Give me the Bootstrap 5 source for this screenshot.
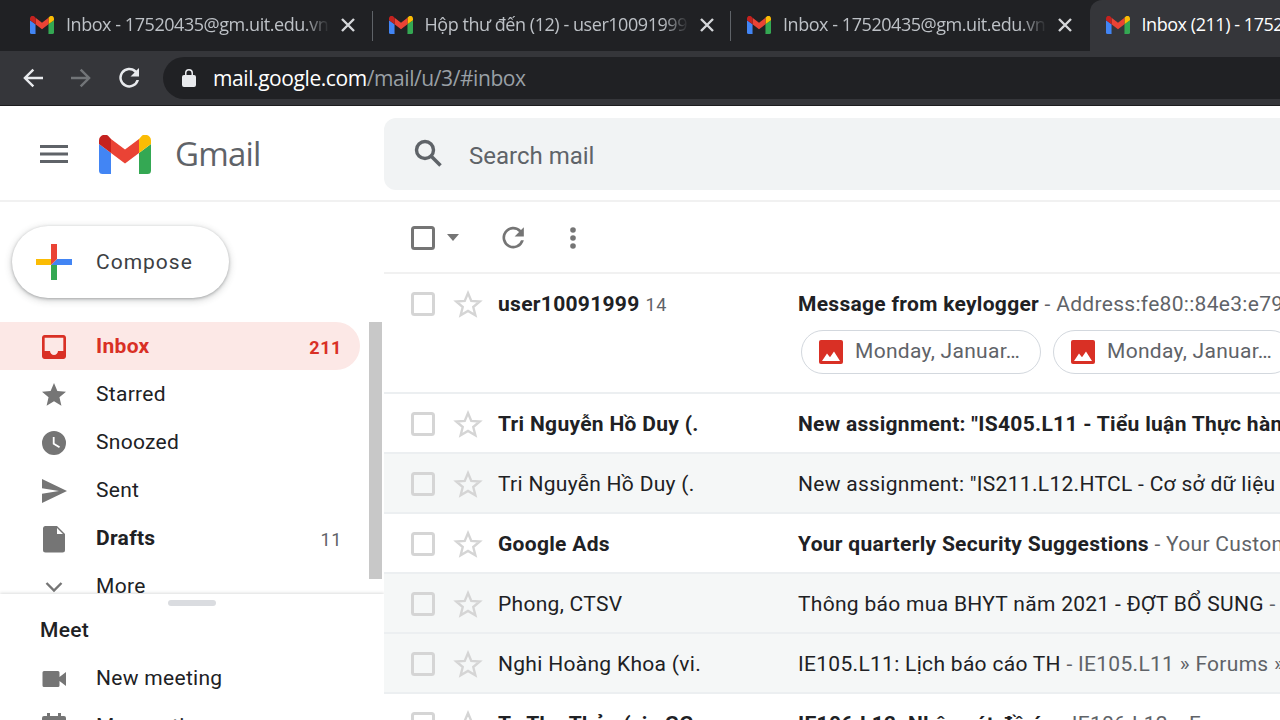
<!DOCTYPE html>
<html lang="vi">
<head>
<meta charset="UTF-8">
<title>Inbox (211) - Gmail</title>
<link href="https://cdn.jsdelivr.net/npm/bootstrap@5.3.0/dist/css/bootstrap.min.css" rel="stylesheet">
<style>
html, body { width: 1280px; height: 720px; overflow: hidden; }
body { font-family: Roboto, "Liberation Sans", sans-serif; background: #fff; color: #202124; font-size: 21px; }

/* chrome */
.tabstrip { height: 51px; background: #202124; padding-left: 14px; overflow: hidden; position: relative; }
.chrome-tab { width: 358.5px; height: 51px; padding: 0 0 2px 16px; font-family: "Open Sans", sans-serif; font-size: 18px; letter-spacing: -.45px; color: #bdc1c6; position: relative; flex: none; }
.chrome-tab .tab-title { width: 264px; margin-left: 12px; white-space: nowrap; overflow: hidden; -webkit-mask-image: linear-gradient(90deg, #000 90%, transparent); mask-image: linear-gradient(90deg, #000 90%, transparent); }
.chrome-tab .tab-x { margin-left: 11px; }
.chrome-tab.has-sep::after { content: ""; position: absolute; right: 0; top: 11px; width: 1px; height: 30px; background: #5f6368; }
.chrome-tab.current { background: #35363a; color: #fff; border-radius: 12px 12px 0 0; }
.chrome-tab.current .tab-title { width: 300px; -webkit-mask-image: none; mask-image: none; }
.addrbar { height: 55px; background: #35363a; border-bottom: 1px solid #1d1d1f; padding: 6px 0 6px 21px; }
.addr-btn { width: 24px; height: 24px; flex: none; }
.omnibox { height: 42px; flex: 1; margin-left: 22px; background: #202124; border-radius: 21px 0 0 21px; padding-left: 19px; font-family: "Open Sans", sans-serif; font-size: 21px; letter-spacing: -.42px; color: #9aa0a6; }
.omnibox b { font-weight: 400; color: #fff; }
.omni-url { padding-top: 2px; margin-left: 1px; }

/* gmail head */
.gm-head { height: 96px; border-bottom: 2px solid #f1f1f1; padding-top: 12px; }
.gm-brand { width: 384px; height: 72px; padding-left: 40px; flex: none; }
.gm-logo { margin-left: 31px; }
.gm-word { font-family: "Open Sans", sans-serif; font-size: 33px; color: #5f6368; margin-left: 24px; letter-spacing: -.8px; }
.searchbox { flex: 1; height: 72px; background: #f1f3f4; border-radius: 12px 0 0 12px; padding-left: 30px; font-size: 24px; color: #5f6368; }
.searchbox svg { margin-right: 27px; margin-bottom: 2px; }
.search-txt { padding-top: 4px; }

/* sidebar */
.gm-body { height: 518px; }
.gm-side { width: 384px; flex: none; overflow: hidden; }
.side-top { height: 392px; overflow: hidden; padding-top: 24px; }
.compose-btn { width: 217px; height: 72px; margin-left: 12px; border-radius: 36px; background: #fff; box-shadow: 0 1px 3px rgba(60,64,67,.35), 0 2px 7px 1px rgba(60,64,67,.2); padding-left: 24px; font-size: 21px; letter-spacing: 1px; color: #3c4043; }
.compose-btn svg { margin-right: 24px; }
.compose-txt { margin-top: 2px; }
.side-wrap { margin-top: 24px; }
.side-list { width: 360px; flex: none; }
.side-bar { width: 13px; height: 257px; margin-left: 9px; background: #c8c8c8; flex: none; }
.side-item { height: 48px; padding: 2px 18px 0 42px; letter-spacing: .3px; color: #202124; border-radius: 0 24px 24px 0; }
.side-item svg { width: 24px; height: 24px; margin-right: 30px; flex: none; overflow: visible; }
.side-item .cnt { margin-left: auto; font-size: 18px; letter-spacing: .6px; color: #5f6368; }
.side-item.sel { background: #fce8e6; color: #d93025; font-weight: 700; }
.side-item.sel .cnt { color: #d93025; font-weight: 700; }
.side-item.strong { font-weight: 700; }
.side-meet { height: 126px; background: #fff; position: relative; box-shadow: 0 -1px 3px rgba(60,64,67,.18); padding-top: 6px; }
.drag-handle { width: 48px; height: 6px; border-radius: 3px; background: #dadce0; margin: 0 auto; }
.meet-title { margin: 9px 0 0 40px; height: 30px; line-height: 30px; font-weight: 500; letter-spacing: .3px; }
.meet-list { margin-top: 9px; }

/* mail list */
.gm-main { flex: 1; overflow: hidden; }
.mail-tools { height: 72px; border-bottom: 2px solid #f1f1f1; padding: 2px 0 0 27px; }
.tool-ico { flex: none; display: block; }
.tool-refresh { margin-left: 37px; }
.tool-more { margin-left: 43px; }
.chk-master { color: #757575; }
.chk-row { color: #d5d5d5; }
.mail-row { height: 60px; border-bottom: 2px solid #eceff1; padding: 2px 0 0 27px; white-space: nowrap; }
.mail-row.tall { height: 120px; align-items: flex-start !important; padding-top: 18px; }
.mail-row.tall .star-ico { margin-top: -3px; }
.mail-row:not(.tall) .who, .mail-row:not(.tall) .what { margin-top: 2px; }
.mail-row.seen { background: #f5f7f7; }
.mail-row .who { width: 300px; margin-left: 15px; flex: none; letter-spacing: .3px; }
.mail-row .what { letter-spacing: .3px; }
.mail-row.fresh .who, .mail-row.fresh .what b { font-weight: 700; }
.mail-row .what b { font-weight: 400; }
.mail-row .snip { color: #5f6368; }
.mail-row .num { font-size: 18px; color: #5f6368; font-weight: 400; margin-left: 6px; letter-spacing: .5px; }
.star-ico { margin-left: 18px; flex: none; }
.row-head { height: 24px; line-height: 24px; }
.chip-line { margin: 14px 0 0 3px; }
.file-chip { width: 240px; height: 44px; flex: none; border: 1.5px solid #d3d8de; border-radius: 22px; padding-left: 17px; color: #5f6368; letter-spacing: .3px; overflow: hidden; }
.file-chip svg { margin-right: 12px; flex: none; }
.sprite { position: absolute; }
</style>
</head>
<body>

<svg width="0" height="0" class="sprite">
  <defs>
    <symbol id="gm" viewBox="0 0 52 39">
      <path fill="#4285f4" d="M3.500 39A3.500 3.500 0 0 1 0 35.500V9l12 9v21z"/>
      <path fill="#34a853" d="M40 39h8.500a3.500 3.500 0 0 0 3.500-3.500V9L40 18z"/>
      <path fill="#fbbc04" d="M40 4v14l12-9V5.500c0-4.800-5.500-7.500-9.300-4.600z"/>
      <path fill="#ea4335" d="M12 18V4l14 10.500L40 4v14L26 28.500z"/>
      <path fill="#c5221f" d="M0 5.500V9l12 9V4L9.300 .9C5.500-2 0 .7 0 5.500z"/>
    </symbol>
    <symbol id="chk" viewBox="0 0 24 24">
      <rect x="1.500" y="1.500" width="21" height="21" rx="2" fill="none" stroke="currentColor" stroke-width="3"/>
    </symbol>
    <symbol id="starline" viewBox="0 0 24 24">
      <path fill="none" stroke="#d5d5d5" stroke-width="1.900" d="M12 3.200l2.600 6.300 6.800.5-5.200 4.400 1.700 6.600L12 17.500 6.100 21l1.700-6.600-5.200-4.400 6.800-.5z"/>
    </symbol>
    <symbol id="pic" viewBox="0 0 24 24">
      <rect width="24" height="24" rx="2" fill="#d93025"/>
      <path fill="#fff" d="M3 21l5-7.500 3 3.800 4-5.800L21 21z"/>
    </symbol>
  </defs>
</svg>

<!-- thanh tab -->
<div class="tabstrip d-flex align-items-center">
  <div class="chrome-tab has-sep d-flex align-items-center">
    <svg width="24" height="18"><use href="#gm"/></svg>
    <span class="tab-title">Inbox - 17520435@gm.uit.edu.vn</span>
    <svg class="tab-x" width="14" height="14" viewBox="0 0 14 14"><path d="M1 1l12 12M13 1L1 13" stroke="#d5d7da" stroke-width="2.400"/></svg>
  </div>
  <div class="chrome-tab has-sep d-flex align-items-center">
    <svg width="24" height="18"><use href="#gm"/></svg>
    <span class="tab-title">Hộp thư đến (12) - user10091999</span>
    <svg class="tab-x" width="14" height="14" viewBox="0 0 14 14"><path d="M1 1l12 12M13 1L1 13" stroke="#d5d7da" stroke-width="2.400"/></svg>
  </div>
  <div class="chrome-tab d-flex align-items-center">
    <svg width="24" height="18"><use href="#gm"/></svg>
    <span class="tab-title">Inbox - 17520435@gm.uit.edu.vn</span>
    <svg class="tab-x" width="14" height="14" viewBox="0 0 14 14"><path d="M1 1l12 12M13 1L1 13" stroke="#d5d7da" stroke-width="2.400"/></svg>
  </div>
  <div class="chrome-tab current d-flex align-items-center">
    <svg width="24" height="18"><use href="#gm"/></svg>
    <span class="tab-title">Inbox (211) - 17520435@gm.uit.edu.vn</span>
  </div>
</div>

<div class="addrbar d-flex align-items-center">
  <svg class="addr-btn" viewBox="0 0 24 24"><path fill="#e8eaed" d="M22 10.800H6.800l6.400-6.400L11.500 2.700 2.200 12l9.300 9.300 1.700-1.700-6.400-6.400H22z"/></svg>
  <svg class="addr-btn ms-4" viewBox="0 0 24 24"><path fill="#727578" d="M2 10.800h15.200l-6.400-6.400 1.700-1.700 9.300 9.300-9.300 9.300-1.700-1.700 6.400-6.400H2z"/></svg>
  <svg class="addr-btn ms-4" viewBox="0 0 24 24"><path fill="#e8eaed" d="M19.400 4.600A10 10 0 1 0 22 14h-2.600a7.500 7.500 0 1 1-1.800-7.600L13.500 10.500H22V2z"/></svg>
  <div class="omnibox d-flex align-items-center">
    <svg width="14" height="18" viewBox="0 0 14 18" class="me-3"><path fill="#e8eaed" d="M12 6h-1V4a4 4 0 0 0-8 0v2H2a2 2 0 0 0-2 2v8a2 2 0 0 0 2 2h10a2 2 0 0 0 2-2V8a2 2 0 0 0-2-2zM4.500 6V4a2.500 2.500 0 0 1 5 0v2z"/></svg>
    <span class="omni-url"><b>mail.google.com</b>/mail/u/3/#inbox</span>
  </div>
</div>

<!-- header gmail -->
<div class="gm-head d-flex">
  <div class="gm-brand d-flex align-items-center">
    <svg width="28" height="18" viewBox="0 0 28 18"><path fill="#5f6368" d="M0 0h28v3H0zM0 7.500h28v3H0zM0 15h28v3H0z"/></svg>
    <svg class="gm-logo" width="52" height="39"><use href="#gm"/></svg>
    <span class="gm-word">Gmail</span>
  </div>
  <div class="searchbox d-flex align-items-center">
    <svg width="28" height="28" viewBox="0 0 28 28"><circle cx="11" cy="11" r="8.500" fill="none" stroke="#5f6368" stroke-width="3.400"/><path d="M17 17l9.500 9.500" stroke="#5f6368" stroke-width="3.600"/></svg>
    <span class="search-txt">Search mail</span>
  </div>
</div>

<div class="gm-body d-flex">
  <!-- cot trai -->
  <div class="gm-side">
    <div class="side-top">
      <div class="compose-btn d-flex align-items-center">
        <svg width="36" height="36" viewBox="0 0 36 36">
          <path fill="#fbbc04" d="M0 15h15v6H0z"/>
          <path fill="#34a853" d="M15 21h6v15h-6z"/>
          <path fill="#4285f4" d="M21 15h15v6H15z"/>
          <path fill="#ea4335" d="M15 0h6v15l-6 6z"/>
        </svg>
        <span class="compose-txt">Compose</span>
      </div>
      <div class="side-wrap d-flex align-items-start">
        <div class="side-list">
          <div class="side-item sel d-flex align-items-center">
            <svg viewBox="3 3 18 18"><path fill="#d93025" d="M19 3H5c-1.100 0-2 .9-2 2v14c0 1.100.9 2 2 2h14c1.100 0 2-.9 2-2V5c0-1.100-.9-2-2-2zm0 12h-4c0 1.660-1.350 3-3 3s-3-1.340-3-3H5V5h14v10z"/></svg>
            Inbox<span class="cnt">211</span>
          </div>
          <div class="side-item d-flex align-items-center">
            <svg viewBox="2 2 20 20"><path fill="#757575" d="M12 17.270L18.180 21l-1.640-7.030L22 9.240l-7.190-.61L12 2 9.190 8.630 2 9.240l5.460 4.730L5.820 21z"/></svg>
            Starred
          </div>
          <div class="side-item d-flex align-items-center">
            <svg viewBox="2 2 20 20"><path fill="#757575" d="M12 2a10 10 0 1 0 0 20 10 10 0 0 0 0-20zm4.200 14.200L11 13V7h1.500v5.200l4.500 2.700z"/></svg>
            Snoozed
          </div>
          <div class="side-item d-flex align-items-center">
            <svg viewBox="0 0 24 24"><path fill="#757575" d="M0 24l25-12L0 0v9.300L17 12 0 14.700z"/></svg>
            Sent
          </div>
          <div class="side-item strong d-flex align-items-center">
            <svg viewBox="0 0 24 24"><path fill="#757575" d="M3 -1h12l8 8v16a2.500 2.500 0 0 1-2.500 2.500h-17A2.500 2.500 0 0 1 1 23V1a2.500 2.500 0 0 1 2-2zm12 2v6h6z"/></svg>
            Drafts<span class="cnt fw-normal">11</span>
          </div>
          <div class="side-item d-flex align-items-center">
            <svg viewBox="0 0 24 24"><path fill="none" stroke="#757575" stroke-width="2.400" d="M4.500 8l7.500 7.500L19.500 8"/></svg>
            More
          </div>
        </div>
        <div class="side-bar"></div>
      </div>
    </div>
    <div class="side-meet">
      <div class="drag-handle"></div>
      <div class="meet-title">Meet</div>
      <div class="meet-list">
        <div class="side-item d-flex align-items-center">
          <svg viewBox="0 0 24 24"><path fill="#757575" d="M2 4h14a1.500 1.500 0 0 1 1.500 1.500V10L24 5v14l-6.500-5v4.500A1.500 1.500 0 0 1 16 20H2a1.500 1.500 0 0 1-1.500-1.500v-13A1.500 1.500 0 0 1 2 4z"/></svg>
          New meeting
        </div>
        <div class="side-item d-flex align-items-center">
          <svg viewBox="0 0 24 24"><path fill="#757575" d="M2 1h3v-3h3v3h8v-3h3v3h3a2 2 0 0 1 2 2v19a2 2 0 0 1-2 2H2a2 2 0 0 1-2-2V3a2 2 0 0 1 2-2z"/></svg>
          My meetings
        </div>
      </div>
    </div>
  </div>

  <!-- danh sach mail -->
  <div class="gm-main">
    <div class="mail-tools d-flex align-items-center">
      <svg class="tool-ico chk-master" width="24" height="24"><use href="#chk"/></svg>
      <svg class="tool-ico ms-2" width="20" height="10" viewBox="0 0 20 10"><path fill="#757575" d="M4 1h12l-6 7z"/></svg>
      <svg class="tool-ico tool-refresh" width="26" height="26" viewBox="0 0 24 24"><path fill="#757575" d="M19.400 4.600A10 10 0 1 0 22 14h-2.600a7.500 7.500 0 1 1-1.800-7.600L13.500 10.500H22V2z"/></svg>
      <svg class="tool-ico tool-more" width="8" height="24" viewBox="0 0 8 24"><circle cx="4" cy="4" r="2.800" fill="#757575"/><circle cx="4" cy="12" r="2.800" fill="#757575"/><circle cx="4" cy="20" r="2.800" fill="#757575"/></svg>
    </div>

    <div class="mail-row tall fresh d-flex">
      <svg class="tool-ico chk-row" width="24" height="24"><use href="#chk"/></svg>
      <svg class="star-ico" width="30" height="30"><use href="#starline"/></svg>
      <div class="who row-head">user10091999<span class="num">14</span></div>
      <div class="flex-grow-0">
        <div class="what row-head"><b>Message from keylogger</b><span class="snip"> - Address:fe80::84e3:e79</span></div>
        <div class="chip-line d-flex gap-2">
          <div class="file-chip d-flex align-items-center"><svg width="24" height="24"><use href="#pic"/></svg>Monday, Januar…</div>
          <div class="file-chip d-flex align-items-center ms-1"><svg width="24" height="24"><use href="#pic"/></svg>Monday, Januar…</div>
        </div>
      </div>
    </div>

    <div class="mail-row fresh d-flex align-items-center">
      <svg class="tool-ico chk-row" width="24" height="24"><use href="#chk"/></svg>
      <svg class="star-ico" width="30" height="30"><use href="#starline"/></svg>
      <div class="who">Tri Nguyễn Hồ Duy (.</div>
      <div class="what"><b>New assignment: "IS405.L11 - Tiểu luận Thực hành</b></div>
    </div>
    <div class="mail-row seen d-flex align-items-center">
      <svg class="tool-ico chk-row" width="24" height="24"><use href="#chk"/></svg>
      <svg class="star-ico" width="30" height="30"><use href="#starline"/></svg>
      <div class="who">Tri Nguyễn Hồ Duy (.</div>
      <div class="what"><b>New assignment: "IS211.L12.HTCL - Cơ sở dữ liệu</b></div>
    </div>
    <div class="mail-row fresh d-flex align-items-center">
      <svg class="tool-ico chk-row" width="24" height="24"><use href="#chk"/></svg>
      <svg class="star-ico" width="30" height="30"><use href="#starline"/></svg>
      <div class="who">Google Ads</div>
      <div class="what"><b>Your quarterly Security Suggestions</b><span class="snip"> - Your Custom</span></div>
    </div>
    <div class="mail-row seen d-flex align-items-center">
      <svg class="tool-ico chk-row" width="24" height="24"><use href="#chk"/></svg>
      <svg class="star-ico" width="30" height="30"><use href="#starline"/></svg>
      <div class="who">Phong, CTSV</div>
      <div class="what"><b>Thông báo mua BHYT năm 2021 - ĐỢT BỔ SUNG</b><span class="snip"> - </span></div>
    </div>
    <div class="mail-row seen d-flex align-items-center">
      <svg class="tool-ico chk-row" width="24" height="24"><use href="#chk"/></svg>
      <svg class="star-ico" width="30" height="30"><use href="#starline"/></svg>
      <div class="who">Nghi Hoàng Khoa (vi.</div>
      <div class="what"><b>IE105.L11: Lịch báo cáo TH</b><span class="snip"> - IE105.L11 » Forums »</span></div>
    </div>
    <div class="mail-row fresh d-flex align-items-center">
      <svg class="tool-ico chk-row" width="24" height="24"><use href="#chk"/></svg>
      <svg class="star-ico" width="30" height="30"><use href="#starline"/></svg>
      <div class="who">Tạ Thu Thảo (via GG.</div>
      <div class="what"><b>IE106.L12: Nhận xét đồ án</b><span class="snip"> - IE106.L12 » F</span></div>
    </div>
  </div>
</div>

<script src="https://cdn.jsdelivr.net/npm/bootstrap@5.3.0/dist/js/bootstrap.bundle.min.js"></script>
</body>
</html>
